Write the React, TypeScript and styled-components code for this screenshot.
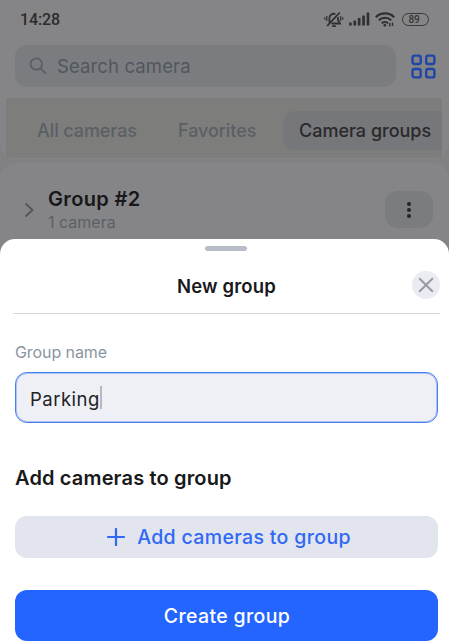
import { useState } from "react";
import styled, { createGlobalStyle } from "styled-components";

const GlobalStyle = createGlobalStyle`
  * {
    box-sizing: border-box;
  }

  body {
    margin: 0;
    background: #858587;
    font-family: Inter, "Liberation Sans", sans-serif;
  }

  button {
    font-family: inherit;
    border: 0;
    padding: 0;
  }
`

const Screen = styled.main`
  width: 449px;
  height: 643px;
  overflow: hidden;
  display: flex;
  flex-direction: column;
  background: #818183;
`

const TopPanel = styled.header`
  flex: none;
  height: 159px;
  background: #858587;
  border-radius: 0 0 16px 16px;
`

const StatusBar = styled.div`
  height: 45px;
  padding: 0 20px 7px 20px;
  display: flex;
  align-items: center;
  justify-content: space-between;
`

const Time = styled.span`
  padding-top: 1px;
  font: 500 16px/20px Roboto, sans-serif;
  letter-spacing: -0.15px;
  color: #2b2b2c;
`

const StatusIcons = styled.div`
  display: flex;
  align-items: center;
  gap: 5px;
`

const Battery = styled.span`
  width: 27px;
  height: 13px;
  margin-left: 2px;
  padding-right: 3px;
  border: 1px solid #38383a;
  border-radius: 7px;
  display: flex;
  align-items: center;
  justify-content: center;
  font: 500 10px/11px Roboto, sans-serif;
  letter-spacing: -0.3px;
  color: #343436;
`

const SearchRow = styled.div`
  display: flex;
  align-items: center;
  gap: 15px;
  padding-left: 15px;
`

const SearchBox = styled.div`
  width: 381px;
  height: 42px;
  padding-left: 14px;
  border-radius: 12px;
  background: #7b7c80;
  display: flex;
  align-items: center;
  gap: 9px;
  font-size: 18.5px;
  letter-spacing: 0.12px;
  color: #50565e;
`

const Tabs = styled.nav`
  width: 436px;
  height: 60px;
  margin: 11px 0 0 6px;
  padding: 4px 0 0 31px;
  background: #7d7d7c;
  display: flex;
  align-items: center;
`

const Tab = styled.span<{ $width: number }>`
  width: ${({ $width }) => $width}px;
  font-size: 18px;
  font-weight: 500;
  letter-spacing: -0.08px;
  white-space: nowrap;
  color: #5a5f66;
`

const ActiveTab = styled(Tab)`
  height: 39px;
  padding-left: 16px;
  line-height: 39px;
  letter-spacing: 0;
  background: #76777a;
  border-radius: 12px 0 0 12px;
  color: #29292b;
`

const GroupRow = styled.section`
  flex: none;
  height: 76px;
  margin-top: 4px;
  padding: 17px 16px 0 23px;
  border-radius: 16px 16px 0 0;
  background: #858587;
  display: flex;
  align-items: center;
`

const GroupInfo = styled.div`
  flex: 1;
  margin-left: 13px;
  padding-top: 1px;
`

const GroupName = styled.h3`
  margin: 0;
  font-size: 20px;
  line-height: 25px;
  font-weight: 600;
  letter-spacing: 0.35px;
  color: #171719;
`

const GroupCount = styled.p`
  margin: 0;
  font-size: 16px;
  line-height: 21px;
  color: #5a6068;
`

const MoreButton = styled.button`
  width: 48px;
  height: 37px;
  border-radius: 13px;
  background: #7b7c80;
  display: flex;
  align-items: center;
  justify-content: center;
`

const Sheet = styled.section`
  flex: none;
  height: 404px;
  padding: 7px 11px 0 15px;
  border-radius: 15px 15px 0 0;
  background: #fff;
`

// fills the corners left open by the rounded sheet
const SheetBackdrop = styled.div`
  flex: none;
  background: #858587;
`

const Handle = styled.div`
  width: 42px;
  height: 5px;
  margin-left: 190px;
  border-radius: 3px;
  background: #b9bdc7;
`

const SheetHeader = styled.div`
  height: 63px;
  margin: 0 -2px;
  padding: 5px 0 0;
  border-bottom: 1px solid #d6d7d9;
  display: grid;
  grid-template-columns: 28px 1fr 28px;
  align-items: center;
`

const SheetTitle = styled.h2`
  grid-column: 2;
  margin: 0;
  padding-top: 3px;
  text-align: center;
  font-size: 18.5px;
  font-weight: 600;
  letter-spacing: 0.15px;
  color: #19191b;
`

const CloseButton = styled.button`
  width: 28px;
  height: 28px;
  border-radius: 50%;
  background: #ebecf1;
  display: flex;
  align-items: center;
  justify-content: center;
`

const SheetBody = styled.div`
  width: 423px;
`

const FieldLabel = styled.label`
  display: block;
  padding-top: 28px;
  font-size: 16px;
  line-height: 20px;
  letter-spacing: -0.08px;
  color: #8b95a1;
`

const Field = styled.div`
  height: 51px;
  margin-top: 10px;
  padding: 2px 0 0 14px;
  border: 1px solid #4a7ff0;
  border-radius: 12px;
  background: #eff0f5;
  box-shadow: inset 0 0 0 1px rgba(74, 127, 240, 0.4);
  display: flex;
  align-items: center;
  font-size: 18.5px;
  letter-spacing: 0.5px;
  color: #222224;
`

const Caret = styled.span`
  width: 2px;
  height: 23px;
  margin-bottom: 2px;
  background: #b6b8bd;
`

const SectionTitle = styled.h2`
  margin: 42px 0 0;
  font-size: 20px;
  line-height: 26px;
  font-weight: 600;
  letter-spacing: 0.15px;
  color: #19191b;
`

const Button = styled.button<{ $primary?: boolean }>`
  width: 100%;
  height: ${({ $primary }) => ($primary ? 51 : 42)}px;
  margin-top: ${({ $primary }) => ($primary ? 32 : 25)}px;
  padding-left: ${({ $primary }) => ($primary ? 1 : 5)}px;
  border-radius: 12px;
  background: ${({ $primary }) => ($primary ? "#2464ff" : "#e2e4ee")};
  color: ${({ $primary }) => ($primary ? "#fff" : "#2f68f5")};
  display: flex;
  align-items: center;
  justify-content: center;
  gap: 12px;
  font-size: 19.5px;
  font-weight: 500;
  letter-spacing: 0.35px;
`

const MutedBell = () => (
  <svg width="20" height="17" viewBox="0 0 20 17" fill="none" stroke="#303032" strokeWidth="1.8">
    <path d="M5.4 11.5V7a4.2 4.2 0 0 1 6-3.8M14 6v3.2l2 3.3H7.6M8.2 15.2h3.6M3.2 14.8 15.8 1.5" />
    <path d="M2.8 5v5M.8 6.2v2.6M16.7 5v5M18.8 6.2v2.6" strokeWidth="1.2" />
  </svg>
)

const Signal = () => (
  <svg width="21" height="14" viewBox="0 0 21 14" fill="#303032">
    <rect x="0" y="10.5" width="2.7" height="3" rx=".6" />
    <rect x="4.4" y="8.5" width="2.7" height="5" rx=".6" />
    <rect x="8.8" y="6" width="2.7" height="7.5" rx=".6" />
    <rect x="13.2" y="3.5" width="2.7" height="10" rx=".6" />
    <rect x="17.6" y=".5" width="2.7" height="13" rx=".6" />
  </svg>
)

const Wifi = () => (
  <svg width="20" height="15" viewBox="0 0 20 15" fill="none" stroke="#303032" strokeWidth="2.2">
    <path d="M.8 5.2a13.2 13.2 0 0 1 18.4 0M3.8 8.3a8.8 8.8 0 0 1 12.4 0M6.7 11.2a4.8 4.8 0 0 1 6.4 0" />
    <circle cx="9.8" cy="13.3" r="1.4" fill="#303032" stroke="none" />
    <path d="M14.7 11v3.5M17.5 10.5V14" strokeWidth="1.4" />
  </svg>
)

const SearchIcon = () => (
  <svg width="19" height="18" viewBox="0 0 19 18" fill="none" stroke="#595e66" strokeWidth="1.8" strokeLinecap="round">
    <circle cx="7.3" cy="7" r="5.7" />
    <path d="m11.5 11.3 5 4.8" />
  </svg>
)

const GridIcon = () => (
  <svg width="25" height="25" viewBox="0 0 25 25" fill="none" stroke="#1f46a8" strokeWidth="2.4">
    <rect x="1.5" y="1.6" width="8.2" height="8.4" rx="2" />
    <rect x="15.2" y="1.6" width="8.2" height="8.4" rx="2" />
    <rect x="1.5" y="15" width="8.2" height="8.4" rx="2" />
    <rect x="15.2" y="15" width="8.2" height="8.4" rx="2" />
  </svg>
)

const Chevron = () => (
  <svg width="12" height="16" viewBox="0 0 12 16" fill="none" stroke="#53585f" strokeWidth="2">
    <path d="m2.5 1.5 7 6.5-7 6.5" />
  </svg>
)

const Dots = () => (
  <svg width="4" height="16" viewBox="0 0 4 16" fill="#252527">
    <circle cx="2" cy="2" r="2" />
    <circle cx="2" cy="8" r="2" />
    <circle cx="2" cy="14" r="2" />
  </svg>
)

const CloseIcon = () => (
  <svg width="16" height="16" viewBox="0 0 16 16" stroke="#949ba6" strokeWidth="2" strokeLinecap="round">
    <path d="m1.7 1.7 12.6 12.6M14.3 1.7 1.7 14.3" />
  </svg>
)

const Plus = () => (
  <svg width="18" height="18" viewBox="0 0 18 18" stroke="#2f68f5" strokeWidth="2.2" strokeLinecap="round">
    <path d="M9 1v16M1 9h16" />
  </svg>
)

export default function App() {
  const [groupName] = useState("Parking")

  return (
    <>
      <GlobalStyle />
      <Screen>
        <TopPanel>
          <StatusBar>
            <Time>14:28</Time>
            <StatusIcons>
              <MutedBell />
              <Signal />
              <Wifi />
              <Battery>89</Battery>
            </StatusIcons>
          </StatusBar>
          <SearchRow>
            <SearchBox><SearchIcon />Search camera</SearchBox>
            <GridIcon />
          </SearchRow>
          <Tabs>
            <Tab $width={141}>All cameras</Tab>
            <Tab $width={105}>Favorites</Tab>
            <ActiveTab $width={159}>Camera groups</ActiveTab>
          </Tabs>
        </TopPanel>
        <GroupRow>
          <Chevron />
          <GroupInfo>
            <GroupName>Group #2</GroupName>
            <GroupCount>1 camera</GroupCount>
          </GroupInfo>
          <MoreButton aria-label="Group menu"><Dots /></MoreButton>
        </GroupRow>
        <SheetBackdrop>
          <Sheet>
            <Handle />
            <SheetHeader>
              <SheetTitle>New group</SheetTitle>
              <CloseButton aria-label="Close"><CloseIcon /></CloseButton>
            </SheetHeader>
            <SheetBody>
              <FieldLabel>Group name</FieldLabel>
              <Field>{groupName}<Caret /></Field>
              <SectionTitle>Add cameras to group</SectionTitle>
              <Button><Plus />Add cameras to group</Button>
              <Button $primary>Create group</Button>
            </SheetBody>
          </Sheet>
        </SheetBackdrop>
      </Screen>
    </>
  )
}
